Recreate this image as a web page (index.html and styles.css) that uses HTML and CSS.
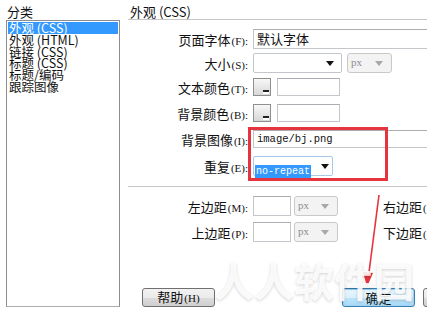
FILE: index.html
```html
<!DOCTYPE html>
<html lang="zh-CN">
<head>
    <meta charset="UTF-8">
    <title>页面属性</title>
    <link rel="stylesheet" href="styles.css">
</head>
<body>

<div class="dialog">
    <!-- 分类 -->
    <div class="category">
        <div class="caption">分类</div>
        <ul class="listbox">
            <li class="selected">外观 (CSS)</li>
            <li>外观 (HTML)</li>
            <li>链接 (CSS)</li>
            <li>标题 (CSS)</li>
            <li>标题/编码</li>
            <li>跟踪图像</li>
        </ul>
    </div>

    <!-- 外观 (CSS) -->
    <div class="panel">
        <div class="caption title">外观 (CSS)</div>
        <div class="rule"></div>

        <div class="form">
            <div class="row row-font">
                <label>页面字体<span class="key">(F):</span></label>
                <div class="textbox wide">默认字体</div>
            </div>
            <div class="row row-size">
                <label>大小<span class="key">(S):</span></label>
                <div class="select size"><span></span><i class="arrow"></i></div>
                <div class="select unit"><span>px</span><i class="arrow"></i></div>
            </div>
            <div class="row row-color">
                <label>文本颜色<span class="key">(T):</span></label>
                <div class="swatch"><i></i></div>
                <div class="textbox short"></div>
            </div>
            <div class="row row-color">
                <label>背景颜色<span class="key">(B):</span></label>
                <div class="swatch"><i></i></div>
                <div class="textbox short"></div>
            </div>
            <div class="row row-image">
                <label>背景图像<span class="key">(I):</span></label>
                <div class="textbox wide mono">image/bj.png</div>
            </div>
            <div class="row row-repeat">
                <label>重复<span class="key">(E):</span></label>
                <div class="select repeat"><span class="picked">no-repeat</span><i class="arrow"></i></div>
            </div>
        </div>

        <div class="rule lower"></div>

        <div class="margins">
            <label>左边距<span class="key">(M):</span></label>
            <div class="textbox tiny"></div>
            <div class="select unit"><span>px</span><i class="arrow"></i></div>
            <label class="side">右边距<span class="key">(R):</span></label>

            <label>上边距<span class="key">(P):</span></label>
            <div class="textbox tiny"></div>
            <div class="select unit"><span>px</span><i class="arrow"></i></div>
            <label class="side">下边距<span class="key">(O):</span></label>
        </div>

        <div class="buttons">
            <button class="btn">帮助<span class="key">(H)</span></button>
            <button class="btn ok">确定</button>
            <button class="btn">取消</button>
        </div>
    </div>
</div>

<!-- annotation overlays -->
<div class="mark"></div>
<svg class="pointer" width="427" height="322" viewBox="0 0 427 322">
    <path d="M379 195 L368 280" stroke="#e5343d" stroke-width="1.6" fill="none"/>
    <path d="M363 272 L367 287 L373 273 Z" fill="#e5343d"/>
</svg>
<div class="watermark">人人软件园</div>

</body>
</html>
```

FILE: styles.css
```css
body {
    margin: 0;
    width: 427px;
    height: 322px;
    overflow: hidden;
    position: relative;
    background-color: #fff;
    font-family: "Noto Sans CJK SC", "Liberation Sans", sans-serif;
    font-size: 13px;
    color: #111;
}

.dialog {
    display: flex;
    height: 322px;
}

.caption {
    height: 15px;
    line-height: 15px;
    padding-top: 4px;
    padding-left: 1px;
}

.key {
    font-family: "Liberation Serif", serif;
    font-size: 11px;
    margin-left: 1px;
}

/* left column */
.category {
    width: 122px;
    flex: none;
    padding-left: 6px;
}
.category .caption {
    padding-top: 4px;
    height: 16px;
}
.listbox {
    list-style: none;
    margin: 0;
    padding: 1px 1px;
    width: 114px;
    height: 287px;
    box-sizing: border-box;
    border: 1px solid #8a8d93;
    border-bottom-color: #a9acb1;
}
.listbox li {
    height: 11.8px;
    line-height: 12px;
    font-size: 12.5px;
    padding-left: 1px;
    white-space: nowrap;
}
.listbox li.selected {
    background-color: #3399ff;
    color: #fff;
}

/* right panel */
.panel {
    flex: 1;
    min-width: 0;
    overflow: hidden;
}
.title {
    padding-left: 2px;
}
.rule {
    height: 1px;
    background-color: #c6c6c6;
    margin-top: 0;
}
.rule.lower {
    margin-top: 10px;
    margin-left: -1px;
}

.form {
    margin-top: 9px;
}
.row {
    display: flex;
    align-items: center;
    gap: 5px;
}
.row label,
.margins label {
    width: 120px;
    flex: none;
    text-align: right;
    white-space: nowrap;
}
.row-font { height: 20px; margin-bottom: 4px; }
.row-size { height: 20px; margin-bottom: 5px; }
.row-color { height: 18px; margin-bottom: 8px; }
.row-image { height: 18px; margin-bottom: 8px; }
.row-repeat { height: 20px; }

.textbox {
    height: 100%;
    box-sizing: border-box;
    border: 1px solid #c3c6cb;
    border-top-color: #abadb3;
    padding: 0 3px;
    line-height: 17px;
    white-space: nowrap;
}
.textbox.wide {
    width: 200px;
    flex: none;
}
.textbox.short {
    width: 63px;
    margin-left: 1px;
}
.textbox.tiny {
    width: 38px;
    height: 20px;
}
.mono {
    font-family: "Liberation Mono", monospace;
    font-size: 10.5px;
    line-height: 16px;
}

.select {
    position: relative;
    height: 20px;
    box-sizing: border-box;
    border: 1px solid #c3c6cb;
    border-radius: 2px;
    background-color: #fff;
    flex: none;
}
.select .arrow {
    position: absolute;
    top: 7px;
    right: 7px;
    border-left: 4px solid transparent;
    border-right: 4px solid transparent;
    border-top: 5px solid #111;
}
.select.size {
    width: 89px;
}
.select.unit {
    width: 45px;
    background-color: #f3f3f3;
    border-color: #c9c9c9;
    border-radius: 3px;
    font-family: "Liberation Serif", serif;
    font-size: 11px;
    color: #8d8d8d;
    line-height: 17px;
    padding-left: 3px;
}
.select.unit .arrow {
    border-top-color: #a7a7a7;
    right: 8px;
}
.select.repeat {
    width: 80px;
    border-color: #a8c8e8;
    padding: 2px 0 0 1px;
}
.select.repeat .arrow {
    right: 3px;
}
.picked {
    display: inline-block;
    background-color: #3399ff;
    color: #fff;
    font-family: "Liberation Mono", monospace;
    font-size: 10px;
    line-height: 13px;
    padding: 0 1px;
}

.swatch {
    position: relative;
    width: 18px;
    height: 18px;
    box-sizing: border-box;
    border: 1px solid #8e8f8f;
    background: linear-gradient(#f8f8f8, #d7d7d7);
    flex: none;
}
.swatch i {
    position: absolute;
    right: 1px;
    bottom: 1px;
    width: 6px;
    height: 4px;
    background-color: #fff;
    border-top: 2px solid #222;
    box-sizing: border-box;
}

/* margins */
.margins {
    display: grid;
    grid-template-columns: 120px 38px 44px auto;
    grid-auto-rows: 20px;
    column-gap: 5px;
    row-gap: 6px;
    margin-top: 9px;
    align-items: center;
}
.margins .select.unit {
    width: 44px;
    margin-left: -2px;
}
.margins label.side {
    width: auto;
    text-align: left;
    padding-left: 38px;
}

/* buttons */
.buttons {
    display: flex;
    gap: 8px;
    margin-top: 46px;
    padding-left: 14px;
}
.btn {
    width: 73px;
    height: 19px;
    flex: none;
    padding: 0;
    font-family: inherit;
    font-size: 13px;
    line-height: 15px;
    color: #111;
    border: 1px solid #707070;
    border-radius: 3px;
    background: linear-gradient(#f2f2f2 0%, #ebebeb 50%, #dddddd 51%, #cfcfcf 100%);
}
.btn.ok {
    margin-left: 119px;
    border-color: #3c7fb1;
    background: linear-gradient(#eaf6fd 0%, #d9f0fc 50%, #bee6fd 51%, #a7d9f5 100%);
    box-shadow: inset 0 0 0 1px #9fd3f5;
}

/* annotations */
.mark {
    position: absolute;
    left: 248px;
    top: 127px;
    width: 140px;
    height: 54px;
    box-sizing: border-box;
    border: 3px solid #e5343d;
}
.pointer {
    position: absolute;
    left: 0;
    top: 0;
}
.watermark {
    position: absolute;
    left: 214px;
    top: 260px;
    font-size: 40px;
    line-height: 40px;
    font-weight: bold;
    color: rgba(255, 255, 255, 0.9);
    text-shadow: 0 1px 3px rgba(0, 0, 0, 0.18);
    white-space: nowrap;
    pointer-events: none;
}
```
